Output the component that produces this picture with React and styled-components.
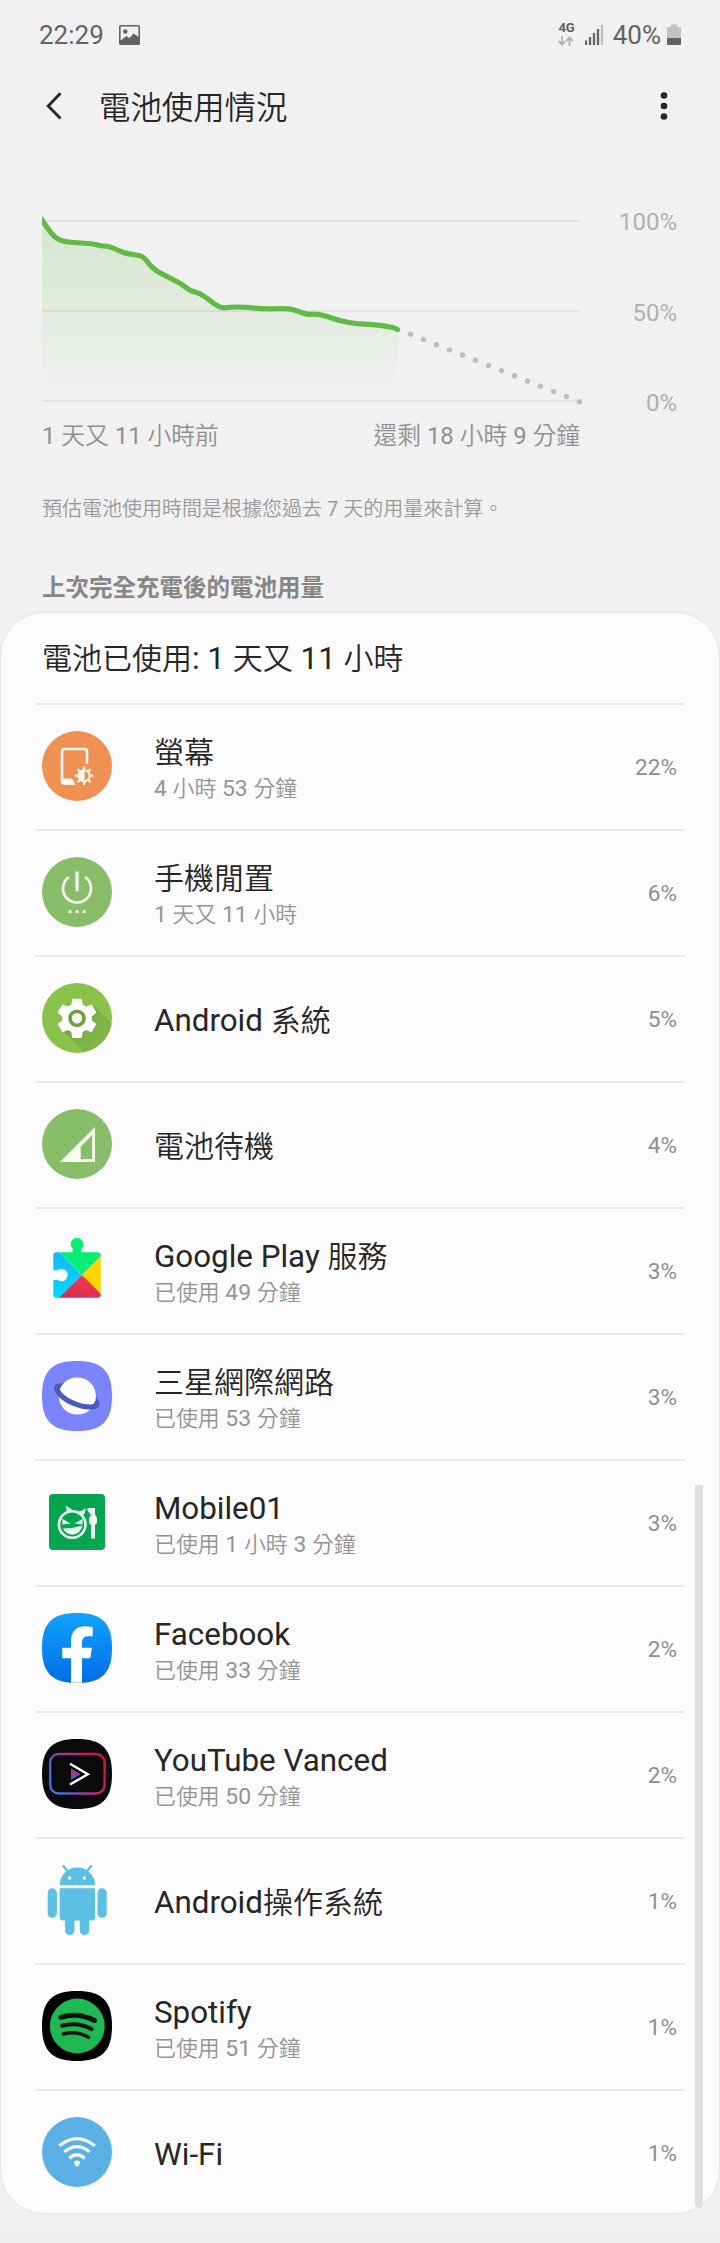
import React from 'react';
import styled, { createGlobalStyle } from 'styled-components';

const SQUIRCLE =
  'M35 0C60 0 70 10 70 35C70 60 60 70 35 70C10 70 0 60 0 35C0 10 10 0 35 0Z';

const ScreenIcon = () => (
  <svg viewBox="0 0 70 70">
    <circle cx="35" cy="35" r="35" fill="#ef9152" />
    <path
      d="M45 33V20.500Q45 18 42.500 18H22.500Q20 18 20 20.500V50Q20 52.500 22.500 52.500H31"
      fill="none"
      stroke="#fff8f0"
      strokeWidth="2.600"
    />
    <path d="M19 47.500H30L33.500 53.700H22Q19 53.700 19 51Z" fill="#fff8f0" />
    <g stroke="#fff8f0" strokeWidth="2.200">
      {[0, 45, 90, 135].map((deg) => (
        <path
          key={deg}
          d="M42 35.400V38.500M42 51V54"
          transform={`rotate(${deg} 42 44.700)`}
        />
      ))}
    </g>
    <circle cx="42" cy="44.700" r="5.600" fill="none" stroke="#fff8f0" strokeWidth="1.800" />
    <path d="M42.500 38.500A6.200 6.200 0 0 0 42.500 50.900Z" fill="#fff8f0" />
  </svg>
);

const PowerIcon = () => (
  <svg viewBox="0 0 70 70">
    <circle cx="35" cy="35" r="35" fill="#88bd6a" />
    <g fill="none" stroke="#f8fff2" strokeWidth="2.700">
      <path d="M35 14.500V34" strokeWidth="3.200" />
      <path d="M27 20A14 14 0 1 0 43 20" />
    </g>
    <path
      d="M26.600 53.300h2.800v2.800h-2.800zM33.700 53.300h2.800v2.800h-2.800zM40.800 53.300h2.800v2.800h-2.800z"
      fill="#f8fff2"
    />
  </svg>
);

const AndroidSystemIcon = () => (
  <svg viewBox="0 0 70 70">
    <defs>
      <clipPath id="system-clip">
        <circle cx="35" cy="35" r="35" />
      </clipPath>
      <linearGradient id="system-shade" x1="30" y1="30" x2="60" y2="62" gradientUnits="userSpaceOnUse">
        <stop offset="0" stopColor="#74a744" />
        <stop offset="1" stopColor="#84b949" />
      </linearGradient>
    </defs>
    <circle cx="35" cy="35" r="35" fill="#8bc34a" />
    <path d="M20 47L52 23L85 56V85H58Z" fill="url(#system-shade)" clipPath="url(#system-clip)" />
    <path
      transform="translate(11.400 11.700) scale(1.967)"
      fill="#fff"
      d="M19.430 12.980c.04-.32.07-.64.07-.98s-.03-.66-.07-.98l2.110-1.650c.19-.15.24-.42.12-.64l-2-3.460c-.12-.22-.39-.3-.61-.22l-2.490 1c-.52-.4-1.080-.73-1.690-.98l-.38-2.650C14.460 2.180 14.250 2 14 2h-4c-.25 0-.46.18-.49.42l-.38 2.650c-.61.25-1.170.59-1.690.98l-2.490-1c-.23-.09-.49 0-.61.22l-2 3.460c-.13.22-.07.49.12.64l2.110 1.650c-.04.32-.07.65-.07.98s.03.66.07.98l-2.110 1.650c-.19.15-.24.42-.12.64l2 3.460c.12.22.39.3.61.22l2.490-1c.52.4 1.080.73 1.690.98l.38 2.650c.03.24.24.42.49.42h4c.25 0 .46-.18.49-.42l.38-2.650c.61-.25 1.170-.59 1.690-.98l2.490 1c.23.09.49 0 .61-.22l2-3.460c.12-.22.07-.49-.12-.64z"
    />
    <circle cx="35" cy="35.300" r="7" fill="#fff" stroke="#6ba03c" strokeWidth="3.600" />
  </svg>
);

const StandbyIcon = () => (
  <svg viewBox="0 0 70 70">
    <circle cx="35" cy="35" r="35" fill="#88bd6a" />
    <path
      d="M18 53L53 18V53ZM38.700 50.200H50.200V26L38.700 37.500Z"
      fill="#f8fff2"
      fillRule="evenodd"
    />
  </svg>
);

const PlayServicesIcon = () => (
  <svg viewBox="0 0 70 70">
    <defs>
      <clipPath id="play-clip">
        <path d="M14.500 17.300H30.600V13.600A6.300 6.300 0 1 1 39.400 13.600V17.300H55.500Q58.700 17.300 58.700 20.500V59.500Q58.700 62.700 55.500 62.700H14.500Q11.300 62.700 11.300 59.500V45.500Q13 45 15 44.500A6.300 6.300 0 1 0 15 35.500Q13 35 11.300 35.500V20.500Q11.300 17.300 14.500 17.300Z" />
      </clipPath>
      <linearGradient id="play-blue" x1="0" y1="0" x2="0" y2="1">
        <stop offset="0" stopColor="#1cb0f4" />
        <stop offset="1" stopColor="#00dcfc" />
      </linearGradient>
      <linearGradient id="play-red" x1="1" y1="0" x2="0" y2="1">
        <stop offset="0" stopColor="#f63b49" />
        <stop offset="1" stopColor="#cf2b55" />
      </linearGradient>
    </defs>
    <g clipPath="url(#play-clip)">
      <path d="M8 8L40 40L15 66H8Z" fill="url(#play-blue)" />
      <path d="M8 0H70V10L40 40L8 8Z" fill="#08ed76" />
      <path d="M40 40L62 18V62Z" fill="#ffd300" />
      <path d="M40 40L66 66H14Z" fill="url(#play-red)" />
    </g>
  </svg>
);

const SamsungInternetIcon = () => (
  <svg viewBox="0 0 70 70">
    <path d={SQUIRCLE} fill="#7a84fb" />
    <ellipse
      cx="35"
      cy="35"
      rx="21.500"
      ry="6.500"
      fill="none"
      stroke="#4a5bb9"
      strokeWidth="5.200"
      transform="rotate(23 35 35)"
    />
    <circle cx="35.300" cy="35" r="18.600" fill="#fff" />
    <path
      d="M-21.500 0A21.500 8.500 0 0 0 21.500 0"
      fill="none"
      stroke="#4a5bb9"
      strokeWidth="5.200"
      strokeLinecap="round"
      transform="translate(35 34.500) rotate(23)"
    />
  </svg>
);

const Mobile01Icon = () => (
  <svg viewBox="0 0 70 70">
    <rect x="7" y="7" width="56" height="56" rx="4" fill="#06a650" />
    <circle cx="30.200" cy="37.500" r="13.300" fill="none" stroke="#effff5" strokeWidth="2.600" />
    <g fill="#effff5">
      <path d="M23.500 18.500L30 22.500L24.500 26.500Q25.500 22 23.500 18.500Z" />
      <path d="M43.500 21Q43.800 26 40 29L34.500 24.500Q40 24.500 43.500 21Z" />
      <path d="M19.500 31.500L28.500 36.500L20 37.500Q21.500 35.500 19.500 31.500Z" />
      <path d="M41.500 31.500L32.500 36.500L41 37.500Q39.500 35.500 41.500 31.500Z" />
      <path d="M21 41.500Q31 41.500 40.500 38.500Q38 47.500 30.500 47.500Q24 47.500 21 41.500Z" />
      <path d="M45.500 21H53V27L55 31V36L53 38V51.500H49V38L47 36V31L49 28L45.500 23.500Z" />
    </g>
  </svg>
);

const FacebookIcon = () => (
  <svg viewBox="0 0 70 70">
    <defs>
      <linearGradient id="facebook-fill" x1="0" y1="0" x2="0" y2="1">
        <stop offset="0" stopColor="#12a2fb" />
        <stop offset="1" stopColor="#026de6" />
      </linearGradient>
    </defs>
    <path d={SQUIRCLE} fill="url(#facebook-fill)" />
    <path
      d="M29 69.800V45.300H20.300V34.700H29V29C29 18.500 34 13.300 43 13.300Q47 13.300 50.700 14V23.200H46Q40 23.200 40 29V34.700H50L48.200 45.300H40V69.800Z"
      fill="#fff"
    />
  </svg>
);

const VancedIcon = () => (
  <svg viewBox="0 0 70 70">
    <defs>
      <linearGradient id="vanced-line" x1="8" y1="50" x2="62" y2="20" gradientUnits="userSpaceOnUse">
        <stop offset="0.100" stopColor="#3f6fe0" />
        <stop offset="0.450" stopColor="#a03a90" />
        <stop offset="0.900" stopColor="#d3163b" />
      </linearGradient>
      <linearGradient id="vanced-play" x1="0" y1="1" x2="0.600" y2="0">
        <stop offset="0.200" stopColor="#3c62d8" />
        <stop offset="0.800" stopColor="#c02a80" />
      </linearGradient>
    </defs>
    <path d={SQUIRCLE} fill="#0a0a0c" />
    <rect
      x="8.200"
      y="15"
      width="54.400"
      height="39.500"
      rx="8.500"
      fill="none"
      stroke="url(#vanced-line)"
      strokeWidth="2.400"
    />
    <path d="M29 29.500L38.500 35.300L29 41Z" fill="url(#vanced-play)" />
    <path d="M28 24.800L45.800 35.300L28 45.500" fill="none" stroke="#fff" strokeWidth="2.400" />
  </svg>
);

const AndroidRobotIcon = () => (
  <svg viewBox="0 0 70 70">
    <g fill="#5bc0e4">
      <path d="M17.700 20A17.650 17.500 0 0 1 53 20Z" />
      <path d="M17.700 23.300H53V52.500Q53 55.500 50 55.500H20.700Q17.700 55.500 17.700 52.500Z" />
      <rect x="5.700" y="23.300" width="9.200" height="29.500" rx="4.600" />
      <rect x="55.500" y="23.300" width="9.200" height="29.500" rx="4.600" />
      <rect x="23.100" y="45" width="9.400" height="25" rx="4.600" />
      <rect x="37.800" y="45" width="9.400" height="25" rx="4.600" />
    </g>
    <path d="M21.500 1L26 7M49 1L44.500 7" stroke="#5bc0e4" strokeWidth="2.400" strokeLinecap="round" />
    <circle cx="27.600" cy="13" r="1.800" fill="#fcfcfc" />
    <circle cx="42.400" cy="13" r="1.800" fill="#fcfcfc" />
  </svg>
);

const SpotifyIcon = () => (
  <svg viewBox="0 0 70 70">
    <path d={SQUIRCLE} fill="#000" />
    <circle cx="35.300" cy="35" r="27.400" fill="#1fb954" />
    <g fill="none" stroke="#04120a" strokeLinecap="round">
      <path d="M18.800 26.300Q36 21 52.500 29.500" strokeWidth="5" />
      <path d="M20.200 34.800Q35.500 30.500 49.500 38" strokeWidth="4.200" />
      <path d="M21.500 43Q35 39.500 46.500 46.300" strokeWidth="3.400" />
    </g>
  </svg>
);

const WifiIcon = () => (
  <svg viewBox="0 0 70 70">
    <circle cx="35" cy="35" r="35" fill="#5bb0e6" />
    <g fill="none" stroke="#f7fdff" strokeWidth="3.300">
      <path d="M17.300 28.700Q35 14.500 52.700 28.700" />
      <path d="M22.300 34.800Q35 24.400 47.700 34.800" />
      <path d="M27.400 41.300Q35 34.200 42.600 41.300" />
    </g>
    <path d="M32 45.500Q32 43.500 35 43.500Q38 43.500 38 45.500Q38 47.500 35 50Q32 47.500 32 45.500Z" fill="#f7fdff" />
  </svg>
);

const apps = [
  { name: '螢幕', detail: '4 小時 53 分鐘', percent: 22, Icon: ScreenIcon },
  { name: '手機閒置', detail: '1 天又 11 小時', percent: 6, Icon: PowerIcon },
  { name: 'Android 系統', percent: 5, Icon: AndroidSystemIcon },
  { name: '電池待機', percent: 4, Icon: StandbyIcon },
  { name: 'Google Play 服務', detail: '已使用 49 分鐘', percent: 3, Icon: PlayServicesIcon },
  { name: '三星網際網路', detail: '已使用 53 分鐘', percent: 3, Icon: SamsungInternetIcon },
  { name: 'Mobile01', detail: '已使用 1 小時 3 分鐘', percent: 3, Icon: Mobile01Icon },
  { name: 'Facebook', detail: '已使用 33 分鐘', percent: 2, Icon: FacebookIcon },
  { name: 'YouTube Vanced', detail: '已使用 50 分鐘', percent: 2, Icon: VancedIcon },
  { name: 'Android操作系統', percent: 1, Icon: AndroidRobotIcon },
  { name: 'Spotify', detail: '已使用 51 分鐘', percent: 1, Icon: SpotifyIcon },
  { name: 'Wi-Fi', percent: 1, Icon: WifiIcon },
];

const usagePoints = [
  [0, 26.5], [7, 38], [17, 48], [36, 50], [50, 50.5], [59, 53],
  [69, 53.5], [82, 60.5], [99, 62.5], [103.5, 66], [110.4, 75.5],
  [125.6, 84], [139, 90.5], [148, 98], [158, 100], [167, 107],
  [179, 115.5], [187.6, 114], [203, 114], [220, 116], [247, 115.5],
  [256, 118], [264, 121.5], [275, 121], [286, 123.5], [298, 128],
  [316, 131], [330, 131.3], [350, 134], [355.6, 136.5],
];

// smooth the samples with quadratic curves through the midpoints
const curvePath = (points) => {
  let d = `M${points[0]}`;
  for (let i = 1; i < points.length - 1; i += 1) {
    const [x, y] = points[i];
    const [nx, ny] = points[i + 1];
    d += `Q${x} ${y} ${(x + nx) / 2} ${(y + ny) / 2}`;
  }
  return `${d}L${points[points.length - 1]}`;
};

const CURVE = curvePath(usagePoints);

// remaining time forecast, from 40% down to empty
const forecastDots = Array.from({ length: 14 }, (_, i) => ({
  cx: 368.5 + i * 13,
  cy: 141.3 + i * 5.19,
}));

const BatteryChart = () => (
  <ChartSvg viewBox="0 0 542 222">
    <defs>
      <linearGradient id="usage-fill" x1="0" y1="26" x2="0" y2="208" gradientUnits="userSpaceOnUse">
        <stop offset="0" stopColor="#62ba46" stopOpacity="0.200" />
        <stop offset="1" stopColor="#62ba46" stopOpacity="0" />
      </linearGradient>
      <clipPath id="usage-clip">
        <rect x="0" y="0" width="542" height="222" />
      </clipPath>
    </defs>
    <path d="M0 28H538M0 118H538M0 208H538" stroke="#e2e3e3" strokeWidth="2" />
    <path d={`${CURVE}V208H0Z`} fill="url(#usage-fill)" />
    <path
      d={CURVE}
      fill="none"
      stroke="#62ba46"
      strokeWidth="5.200"
      strokeLinecap="round"
      strokeLinejoin="round"
      clipPath="url(#usage-clip)"
    />
    {forecastDots.map((dot) => (
      <circle key={dot.cx} cx={dot.cx} cy={dot.cy} r="2.700" fill="#b3c0c7" />
    ))}
  </ChartSvg>
);

// Latin letters and digits run slightly larger than the Chinese text
const MixedText = ({ children }) =>
  children
    .split(/([ -~]+)/)
    .filter(Boolean)
    .map((part, index) =>
      /^[ -~]/.test(part) ? <Latin key={index}>{part}</Latin> : part
    );

const App = () => {
  return (
    <Screen>
      <GlobalStyle />
      <StatusBar>
        <StatusGroup>
          <span>22:29</span>
          <PictureSvg viewBox="0 0 21 20">
            <rect width="21" height="20" rx="1.500" fill="#636363" />
            <path
              d="M1.600 1.600H19.400V12L17 10L14.500 8.500L10.500 13L7.500 11L1.600 15.500Z"
              fill="#f1f1f1"
            />
            <circle cx="6.300" cy="6.600" r="2.300" fill="#636363" />
          </PictureSvg>
        </StatusGroup>
        <StatusGroup>
          <Network>
            <span>4G</span>
            <svg width="16" height="10" viewBox="0 0 16 10">
              <path
                d="M4 0V8M0.800 5L4 8.500L7.200 5M11.500 10V2M8.300 5L11.500 1.500L14.700 5"
                fill="none"
                stroke="#b5b5b5"
                strokeWidth="1.900"
              />
            </svg>
          </Network>
          <SignalSvg viewBox="0 0 19 20">
            <path d="M1 20V15.500M5 20V12M9 20V8M13 20V4" stroke="#636363" strokeWidth="2.300" />
            <path d="M17 20V0" stroke="#bdbdbd" strokeWidth="2.300" />
          </SignalSvg>
          <span>40%</span>
          <BatterySvg viewBox="0 0 14 22">
            <path d="M4 0.500H10V3H13Q14 3 14 4V14H0V4Q0 3 1 3H4Z" fill="#c2c2c2" />
            <path d="M0 14H14V20Q14 21 13 21H1Q0 21 0 20Z" fill="#636363" />
          </BatterySvg>
        </StatusGroup>
      </StatusBar>

      <Header>
        <BackSvg viewBox="0 0 16 28">
          <path d="M14.500 1.200L2.200 14L14.500 26.500" fill="none" stroke="#262626" strokeWidth="2.800" />
        </BackSvg>
        <Title>電池使用情況</Title>
        <MoreSvg viewBox="0 0 8 28">
          <circle cx="4" cy="3.500" r="3.300" fill="#262626" />
          <circle cx="4" cy="14" r="3.300" fill="#262626" />
          <circle cx="4" cy="24.500" r="3.300" fill="#262626" />
        </MoreSvg>
      </Header>

      <ChartSection>
        <BatteryChart />
        <PercentAxis>
          <span>100%</span>
          <span>50%</span>
          <span>0%</span>
        </PercentAxis>
      </ChartSection>
      <TimeAxis>
        <span>1 天又 11 小時前</span>
        <span>還剩 18 小時 9 分鐘</span>
      </TimeAxis>

      <Note>預估電池使用時間是根據您過去 7 天的用量來計算。</Note>
      <SectionTitle>上次完全充電後的電池用量</SectionTitle>

      <Card>
        <CardHeader>
          <MixedText>電池已使用: 1 天又 11 小時</MixedText>
        </CardHeader>
        {apps.map(({ name, detail, percent, Icon }) => (
          <Row key={name}>
            <IconBox>
              <Icon />
            </IconBox>
            <RowText>
              <RowTitle>
                <MixedText>{name}</MixedText>
              </RowTitle>
              {detail && (
                <RowDetail>
                  <MixedText>{detail}</MixedText>
                </RowDetail>
              )}
            </RowText>
            <Percent>{percent}%</Percent>
          </Row>
        ))}
        <ScrollThumb />
      </Card>
    </Screen>
  );
};

export default App;

const GlobalStyle = createGlobalStyle`
  * {
    box-sizing: border-box;
  }

  body {
    margin: 0;
    background-color: #f1f1f1;
    font-family: Roboto, 'Noto Sans CJK TC DemiLight', 'Noto Sans CJK TC', sans-serif;
  }

  svg {
    display: block;
    flex-shrink: 0;
  }
`;

const Screen = styled.div`
  display: flex;
  flex-direction: column;
  width: 720px;
  height: 2243px;
  overflow: hidden;
  background: linear-gradient(#f1f1f1 98.500%, #eeeeee);
  color: #262626;
`;

const Latin = styled.span`
  font-size: 1.045em;
  line-height: 1;
  white-space: pre-wrap;
`;

const StatusBar = styled.div`
  display: flex;
  justify-content: space-between;
  align-items: center;
  height: 68px;
  padding: 1px 39px 0 39px;
  font-size: 26px;
  color: #636363;
`;

const StatusGroup = styled.div`
  display: flex;
  align-items: center;
`;

const PictureSvg = styled.svg`
  width: 21px;
  height: 20px;
  margin-left: 15px;
`;

const Network = styled.div`
  display: flex;
  flex-direction: column;
  gap: 3px;
  margin-right: 10px;
  font-size: 13px;
  font-weight: 700;
  line-height: 10px;
`;

const SignalSvg = styled.svg`
  width: 19px;
  height: 20px;
  margin-right: 9px;
`;

const BatterySvg = styled.svg`
  width: 14px;
  height: 22px;
  margin-left: 6px;
`;

const Header = styled.header`
  display: flex;
  align-items: center;
  height: 76px;
  padding: 0 52px 0 46px;
`;

const BackSvg = styled.svg`
  width: 16px;
  height: 28px;
`;

const Title = styled.h1`
  flex: 1;
  margin: 0 0 0 37px;
  padding-top: 5px;
  font-size: 31.400px;
  font-weight: 400;
  line-height: 44px;
`;

const MoreSvg = styled.svg`
  width: 8px;
  height: 28px;
`;

const ChartSection = styled.div`
  display: flex;
  justify-content: space-between;
  height: 222px;
  margin-top: 49px;
  padding: 0 43px 0 42px;
`;

const ChartSvg = styled.svg`
  width: 542px;
  height: 222px;
`;

const PercentAxis = styled.div`
  display: flex;
  flex-direction: column;
  justify-content: space-between;
  height: 211px;
  margin-top: 14px;
  text-align: right;
  font-size: 24px;
  line-height: 30px;
  color: #b0b0b0;
`;

const TimeAxis = styled.div`
  display: flex;
  justify-content: space-between;
  width: 580px;
  padding-left: 42px;
  margin-top: 4px;
  font-size: 23.800px;
  line-height: 34px;
  color: #909090;
`;

const Note = styled.p`
  margin: 41px 0 0 42px;
  font-size: 20px;
  line-height: 30px;
  color: #9a9a9a;
`;

const SectionTitle = styled.h2`
  margin: 47px 0 0 42px;
  font-family: Roboto, 'Noto Sans CJK TC', sans-serif;
  font-size: 23.500px;
  font-weight: 700;
  line-height: 34px;
  color: #868686;
`;

const Card = styled.section`
  position: relative;
  height: 1602px;
  margin-top: 7px;
  border: 1px solid #e5e5e5;
  border-radius: 44px;
  background-color: #fcfcfc;
`;

const CardHeader = styled.div`
  height: 90px;
  padding: 0 41px;
  font-size: 30px;
  line-height: 92px;
`;

const Row = styled.div`
  display: flex;
  align-items: center;
  height: 126px;
  margin: 0 34px;
  padding: 0 8px 0 7px;
  border-top: 2px solid #e9e9e9;
`;

const IconBox = styled.div`
  width: 70px;
  height: 70px;
  margin-bottom: 2px;
`;

const RowText = styled.div`
  flex: 1;
  margin-left: 42px;
  padding-top: 3px;
`;

const RowTitle = styled.div`
  font-size: 30px;
  line-height: 40px;
`;

const RowDetail = styled.div`
  font-size: 21.900px;
  line-height: 32px;
  color: #949494;
`;

const Percent = styled.div`
  font-size: 22.600px;
  color: #8f8f8f;
`;

const ScrollThumb = styled.div`
  position: absolute;
  top: 872px;
  right: 16px;
  width: 8px;
  height: 723px;
  border-radius: 0 0 4px 4px;
  background-color: #dfdfdf;
`;
